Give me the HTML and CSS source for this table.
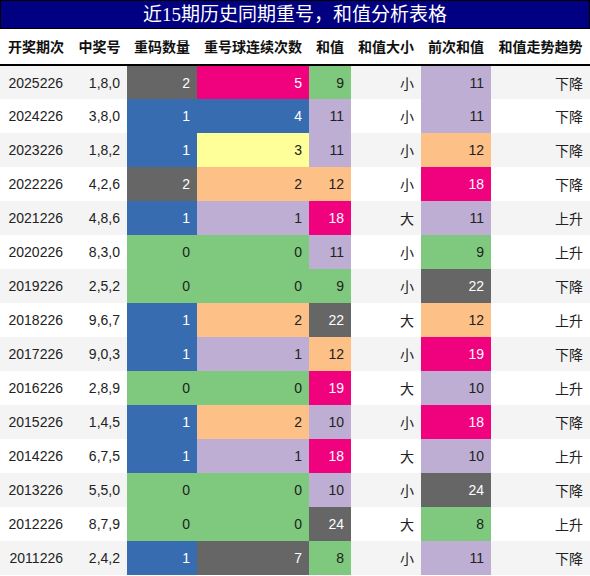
FILE: index.html
```html
<!DOCTYPE html>
<html lang="zh-CN">
<head>
<meta charset="UTF-8">
<title>近15期历史同期重号，和值分析表格</title>
<link rel="stylesheet" href="styles.css">
</head>
<body>

<div class="title">近15期历史同期重号，和值分析表格</div>

<table class="stats">
  <colgroup>
    <col class="c-issue"><col class="c-nums"><col class="c-rep"><col class="c-run">
    <col class="c-sum"><col class="c-size"><col class="c-prev"><col class="c-trend">
  </colgroup>
  <thead>
    <tr>
      <th>开奖期次</th><th>中奖号</th><th>重码数量</th><th>重号球连续次数</th>
      <th>和值</th><th>和值大小</th><th>前次和值</th><th>和值走势趋势</th>
    </tr>
  </thead>
  <tbody>
    <tr><td class="issue">2025226</td><td>1,8,0</td><td class="grey">2</td><td class="pink">5</td><td class="green">9</td><td>小</td><td class="purple">11</td><td>下降</td></tr>
    <tr><td class="issue">2024226</td><td>3,8,0</td><td class="blue">1</td><td class="blue">4</td><td class="purple">11</td><td>小</td><td class="purple">11</td><td>下降</td></tr>
    <tr><td class="issue">2023226</td><td>1,8,2</td><td class="blue">1</td><td class="yellow">3</td><td class="purple">11</td><td>小</td><td class="orange">12</td><td>下降</td></tr>
    <tr><td class="issue">2022226</td><td>4,2,6</td><td class="grey">2</td><td class="orange">2</td><td class="orange">12</td><td>小</td><td class="pink">18</td><td>下降</td></tr>
    <tr><td class="issue">2021226</td><td>4,8,6</td><td class="blue">1</td><td class="purple">1</td><td class="pink">18</td><td>大</td><td class="purple">11</td><td>上升</td></tr>
    <tr><td class="issue">2020226</td><td>8,3,0</td><td class="green">0</td><td class="green">0</td><td class="purple">11</td><td>小</td><td class="green">9</td><td>上升</td></tr>
    <tr><td class="issue">2019226</td><td>2,5,2</td><td class="green">0</td><td class="green">0</td><td class="green">9</td><td>小</td><td class="grey">22</td><td>下降</td></tr>
    <tr><td class="issue">2018226</td><td>9,6,7</td><td class="blue">1</td><td class="orange">2</td><td class="grey">22</td><td>大</td><td class="orange">12</td><td>上升</td></tr>
    <tr><td class="issue">2017226</td><td>9,0,3</td><td class="blue">1</td><td class="purple">1</td><td class="orange">12</td><td>小</td><td class="pink">19</td><td>下降</td></tr>
    <tr><td class="issue">2016226</td><td>2,8,9</td><td class="green">0</td><td class="green">0</td><td class="pink">19</td><td>大</td><td class="purple">10</td><td>上升</td></tr>
    <tr><td class="issue">2015226</td><td>1,4,5</td><td class="blue">1</td><td class="orange">2</td><td class="purple">10</td><td>小</td><td class="pink">18</td><td>下降</td></tr>
    <tr><td class="issue">2014226</td><td>6,7,5</td><td class="blue">1</td><td class="purple">1</td><td class="pink">18</td><td>大</td><td class="purple">10</td><td>上升</td></tr>
    <tr><td class="issue">2013226</td><td>5,5,0</td><td class="green">0</td><td class="green">0</td><td class="purple">10</td><td>小</td><td class="grey">24</td><td>下降</td></tr>
    <tr><td class="issue">2012226</td><td>8,7,9</td><td class="green">0</td><td class="green">0</td><td class="grey">24</td><td>大</td><td class="green">8</td><td>上升</td></tr>
    <tr><td class="issue">2011226</td><td>2,4,2</td><td class="blue">1</td><td class="grey">7</td><td class="green">8</td><td>小</td><td class="purple">11</td><td>下降</td></tr>
  </tbody>
</table>

</body>
</html>
```

FILE: styles.css
```css
* {
  box-sizing: border-box;
}
body {
  margin: 0;
  width: 590px;
  background: white;
  color: #222;
  font-family: "Liberation Sans", "Noto Sans CJK SC", sans-serif;
}

.title {
  height: 29px;
  line-height: 27px;
  background: #000080;
  border: 1px solid black;
  color: white;
  text-align: center;
  font-family: "Liberation Serif", "Noto Sans CJK SC", serif;
  font-size: 19px;
}

.stats {
  width: 590px;
  border-collapse: collapse;
  table-layout: fixed;
  font-size: 14px;
}
.c-issue { width: 72px; }
.c-nums { width: 55px; }
.c-rep { width: 70px; }
.c-run { width: 112px; }
.c-sum { width: 42px; }
.c-size { width: 70px; }
.c-prev { width: 70px; }
.c-trend { width: 99px; }

th {
  height: 36px;
  padding: 0 0 2px;
  font-weight: bold;
  text-align: center;
  white-space: nowrap;
  color: #111;
  border-bottom: 2px solid black;
}
td {
  height: 34px;
  padding: 0 7px 0 0;
  text-align: right;
  white-space: nowrap;
}
td.issue { padding-right: 9px; }
tbody tr:nth-child(odd) { background: #f4f4f4; }

/* cell colours */
.grey { background: #666666; color: white; }
.pink { background: #f0027f; color: white; }
.blue { background: #386cb0; color: white; }
.green { background: #7fc97f; }
.purple { background: #beaed4; }
.orange { background: #fdc086; }
.yellow { background: #ffff99; }
```
